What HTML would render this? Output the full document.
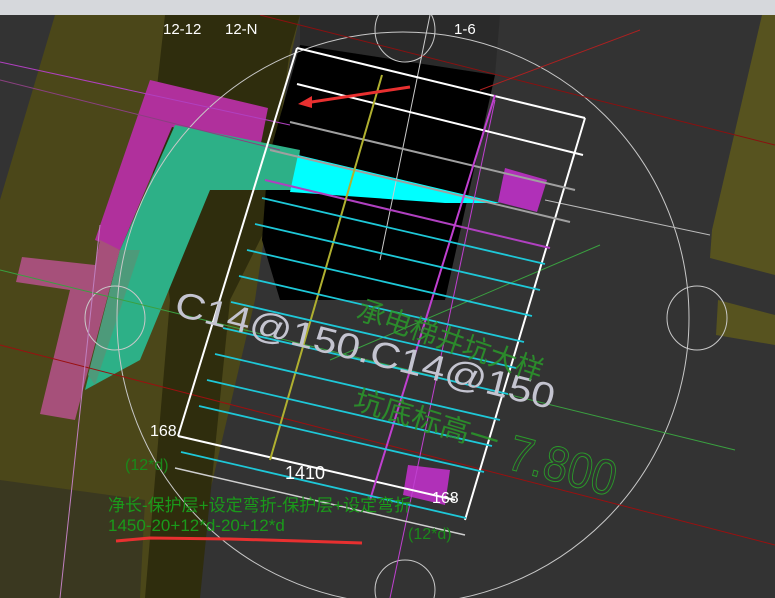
<!DOCTYPE html>
<html><head><meta charset="utf-8"><style>
html,body{margin:0;padding:0;width:775px;height:598px;overflow:hidden;background:#333333}
svg{display:block}
text{font-family:"Liberation Sans","Noto Sans CJK SC",sans-serif}
</style></head><body>
<svg width="775" height="598" viewBox="0 0 775 598" xmlns="http://www.w3.org/2000/svg">
<rect width="775" height="598" fill="#333333"/>
<polygon points="55,15 300,15 290,60 255,300 185,598 0,598 0,200" fill="#4b4719"/>
<polygon points="165,15 300,15 290,50 265,230 230,300 200,598 145,598 170,300 150,150" fill="#2f2d0d"/>
<polygon points="0,480 145,500 140,598 0,598" fill="#3a3820"/>
<polygon points="762,15 775,15 775,275 710,258 712,230" fill="#57531f"/>
<polygon points="718,300 775,315 775,345 716,335" fill="#57531f"/>
<polygon points="300,15 500,15 495,75 300,45" fill="#2a2a2a"/>
<polygon points="300,45 495,75 445,300 280,300 262,240 268,160" fill="#000"/>
<polygon points="150,80 268,108 260,148 172,127 120,250 95,240" fill="#b0309c"/>
<polygon points="22,257 95,265 100,240 120,250 75,420 40,414 70,290 16,282" fill="#a6507a"/>
<polygon points="175,125 300,150 295,190 210,190 140,360 85,390 120,250" fill="#2db087"/>
<polygon points="120,250 140,250 95,385 88,375" fill="#4d9a7a"/>
<polygon points="298,155 500,203 445,203 290,192" fill="#00ffff"/>
<polygon points="505,168 547,180 537,212 498,202" fill="#b030b8"/>
<polygon points="408,465 450,470 445,505 403,495" fill="#b030b8"/>
<g fill="none" stroke="#c8c8c8" stroke-width="1">
<circle cx="403" cy="318" r="286"/>
<ellipse cx="405" cy="30" rx="30" ry="32"/>
<ellipse cx="115" cy="318" rx="30" ry="32"/>
<ellipse cx="697" cy="318" rx="30" ry="32"/>
<ellipse cx="405" cy="590" rx="30" ry="30"/>
</g>
<g stroke-width="1" fill="none">
<line x1="260" y1="15" x2="775" y2="145" stroke="#8a1010"/>
<line x1="0" y1="345" x2="775" y2="545" stroke="#9a1010"/>
<line x1="0" y1="62" x2="290" y2="125" stroke="#b040c0"/>
<line x1="0" y1="80" x2="280" y2="150" stroke="#8a4080"/>
<line x1="0" y1="270" x2="735" y2="450" stroke="#3aa040"/>
<line x1="330" y1="360" x2="600" y2="245" stroke="#3aa040"/>
<line x1="545" y1="200" x2="710" y2="235" stroke="#bbbbbb"/>
<line x1="430" y1="15" x2="380" y2="260" stroke="#cccccc"/>
<line x1="100" y1="225" x2="60" y2="598" stroke="#c080c0"/>
<line x1="390" y1="598" x2="495" y2="100" stroke="#c040d0"/>
<line x1="640" y1="30" x2="480" y2="90" stroke="#b02020"/>
</g>
<g fill="none" stroke-width="2">
<line x1="297" y1="48" x2="585" y2="118" stroke="#fff"/>
<line x1="297" y1="84" x2="583" y2="155" stroke="#fff"/>
<line x1="297" y1="48" x2="178" y2="436" stroke="#fff"/>
<line x1="585" y1="118" x2="465" y2="520" stroke="#fff"/>
<line x1="178" y1="436" x2="455" y2="500" stroke="#fff"/>
<line x1="175" y1="468" x2="465" y2="535" stroke="#cfcfcf" stroke-width="1.5"/>
<line x1="290" y1="122" x2="575" y2="190" stroke="#a0a0a0"/>
<line x1="270" y1="150" x2="570" y2="222" stroke="#a0a0a0"/>
<line x1="265" y1="180" x2="550" y2="248" stroke="#b040c0"/>
<line x1="382" y1="75" x2="270" y2="460" stroke="#b0b030"/>
<line x1="495" y1="95" x2="370" y2="500" stroke="#c040d0"/>
</g>
<g stroke="#1ec8d8" stroke-width="1.8">
<line x1="262" y1="198" x2="545" y2="264"/>
<line x1="255" y1="224" x2="540" y2="290"/>
<line x1="247" y1="250" x2="532" y2="316"/>
<line x1="239" y1="276" x2="524" y2="342"/>
<line x1="231" y1="302" x2="516" y2="368"/>
<line x1="223" y1="328" x2="508" y2="394"/>
<line x1="215" y1="354" x2="500" y2="420"/>
<line x1="207" y1="380" x2="492" y2="446"/>
<line x1="199" y1="406" x2="484" y2="472"/>
<line x1="181" y1="452" x2="466" y2="518"/>
</g>
<text x="163" y="34" font-size="15" fill="#fff">12-12</text>
<text x="225" y="34" font-size="15" fill="#fff">12-N</text>
<text x="454" y="34" font-size="15" fill="#fff">1-6</text>
<line x1="410" y1="87" x2="305" y2="103" stroke="#e83030" stroke-width="3"/>
<polygon points="298,104 312,96 312,108" fill="#e83030"/>
<text transform="translate(173,315) rotate(14)" font-size="36" fill="#c4c4d0" textLength="390" lengthAdjust="spacingAndGlyphs">C14@150.C14@150</text>
<text transform="translate(355,318) rotate(19)" font-size="28" fill="#2a9a2a" fill-opacity="0.85" textLength="195" lengthAdjust="spacingAndGlyphs">承电梯井坑大样</text>
<text transform="translate(352,408) rotate(17)" font-size="28" fill="#2a9a2a" fill-opacity="0.85" textLength="150" lengthAdjust="spacingAndGlyphs">坑底标高一</text>
<text transform="translate(505,468) rotate(15)" font-size="50" fill="none" stroke="#2a9a2a" textLength="110" lengthAdjust="spacingAndGlyphs">7.800</text>
<text x="150" y="436" font-size="16" fill="#fff">168</text>
<text x="125" y="470" font-size="16" fill="#1a8a1a">(12*d)</text>
<text x="285" y="479" font-size="18" fill="#fff">1410</text>
<text x="432" y="503" font-size="16" fill="#fff">168</text>
<text x="408" y="539" font-size="16" fill="#1a8a1a">(12*d)</text>
<text x="108" y="511" font-size="17" fill="#1a9a1a">净长-保护层+设定弯折-保护层+设定弯折</text>
<text x="108" y="531" font-size="17" fill="#1a9a1a">1450-20+12*d-20+12*d</text>
<path d="M116,541 L150,538 L230,539 L300,541 L362,543" stroke="#e83030" stroke-width="3" fill="none"/>
<rect x="0" y="0" width="775" height="15" fill="#d6d8dc"/>
</svg>
</body></html>
